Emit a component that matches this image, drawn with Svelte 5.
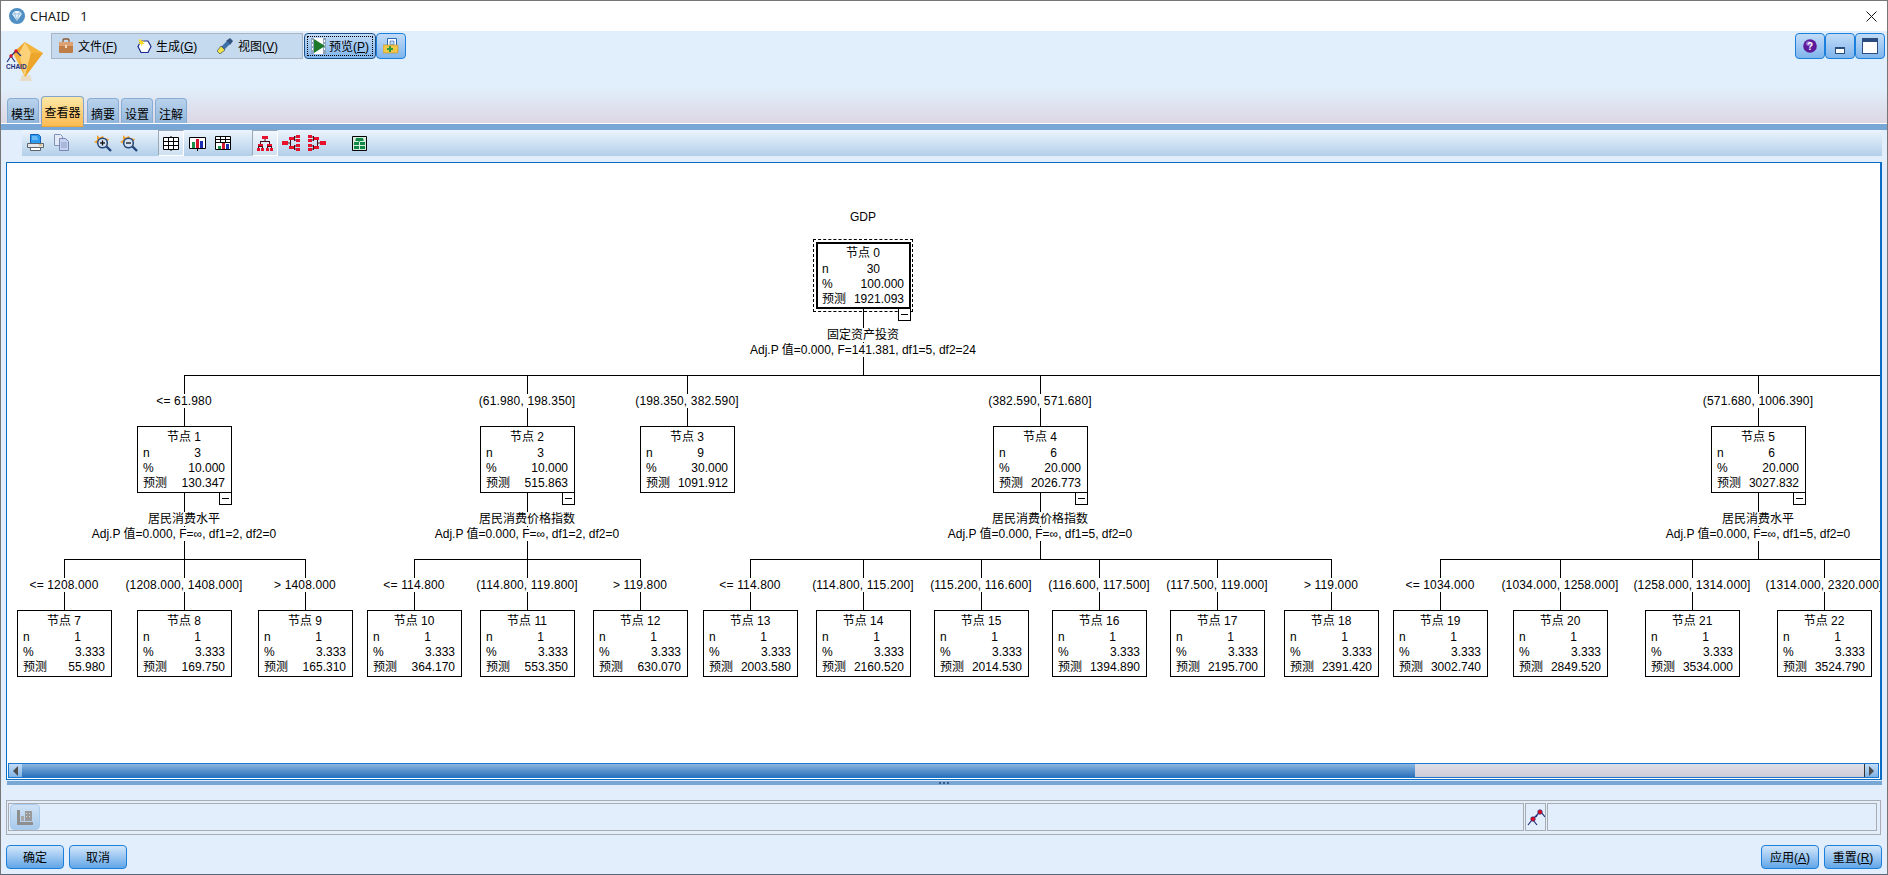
<script>
  const OX = 7;
  const OY = 163;
  const L0 = 242, L1 = 426, L2 = 610;

  const parents = [
    { id: 0, x: 863, y: L0, n: 30, pct: '100.000', pred: '1921.093', root: true, label: null,
      split: '固定资产投资', stat: 'Adj.P 值=0.000, F=141.381, df1=5, df2=24' },
    { id: 1, x: 184, y: L1, n: 3, pct: '10.000', pred: '130.347', label: '<= 61.980',
      split: '居民消费水平', stat: 'Adj.P 值=0.000, F=∞, df1=2, df2=0' },
    { id: 2, x: 527, y: L1, n: 3, pct: '10.000', pred: '515.863', label: '(61.980, 198.350]',
      split: '居民消费价格指数', stat: 'Adj.P 值=0.000, F=∞, df1=2, df2=0' },
    { id: 3, x: 687, y: L1, n: 9, pct: '30.000', pred: '1091.912', label: '(198.350, 382.590]' },
    { id: 4, x: 1040, y: L1, n: 6, pct: '20.000', pred: '2026.773', label: '(382.590, 571.680]',
      split: '居民消费价格指数', stat: 'Adj.P 值=0.000, F=∞, df1=5, df2=0' },
    { id: 5, x: 1758, y: L1, n: 6, pct: '20.000', pred: '3027.832', label: '(571.680, 1006.390]',
      split: '居民消费水平', stat: 'Adj.P 值=0.000, F=∞, df1=5, df2=0' }
  ];

  const leaves = [
    [7, 64, '55.980', '<= 1208.000'],
    [8, 184, '169.750', '(1208.000, 1408.000]'],
    [9, 305, '165.310', '> 1408.000'],
    [10, 414, '364.170', '<= 114.800'],
    [11, 527, '553.350', '(114.800, 119.800]'],
    [12, 640, '630.070', '> 119.800'],
    [13, 750, '2003.580', '<= 114.800'],
    [14, 863, '2160.520', '(114.800, 115.200]'],
    [15, 981, '2014.530', '(115.200, 116.600]'],
    [16, 1099, '1394.890', '(116.600, 117.500]'],
    [17, 1217, '2195.700', '(117.500, 119.000]'],
    [18, 1331, '2391.420', '> 119.000'],
    [19, 1440, '3002.740', '<= 1034.000'],
    [20, 1560, '2849.520', '(1034.000, 1258.000]'],
    [21, 1692, '3534.000', '(1258.000, 1314.000]'],
    [22, 1824, '3524.790', '(1314.000, 2320.000]']
  ].map(([id, x, pred, label]) => ({ id, x, y: L2, n: 1, pct: '3.333', pred, label }));

  const nodes = [...parents, ...leaves];

  const groups = [
    { from: 863, y: L0, kids: [184, 527, 687, 1040, 1758], end: 1880 },
    { from: 184, y: L1, kids: [64, 184, 305] },
    { from: 527, y: L1, kids: [414, 527, 640] },
    { from: 1040, y: L1, kids: [750, 863, 981, 1099, 1217, 1331] },
    { from: 1758, y: L1, kids: [1440, 1560, 1692, 1824], end: 1880 }
  ];

  const lines = groups.flatMap((g) => {
    const bus = g.y + 133;
    const right = g.end ?? Math.max(...g.kids);
    return [
      `M${g.from - OX + 0.5} ${g.y + 66 - OY}V${bus - OY}`,
      `M${Math.min(...g.kids) - OX} ${bus - OY + 0.5}H${right - OX + 1}`,
      ...g.kids.map((k) => `M${k - OX + 0.5} ${bus - OY}V${bus + 51 - OY}`)
    ];
  }).join('');

  const tools = [
    [{ k: 'print' }, { k: 'copy' }],
    [{ k: 'zin' }, { k: 'zout' }],
    [{ k: 'table', on: true }, { k: 'chart' }, { k: 'mix' }],
    [{ k: 'treed', on: true }, { k: 'treel' }, { k: 'treer' }],
    [{ k: 'green' }]
  ];

  const tabs = [
    { t: '模型' },
    { t: '查看器', on: true },
    { t: '摘要' },
    { t: '设置' },
    { t: '注解' }
  ];
</script>

{#snippet glass(minus)}
  <svg width="18" height="17" viewBox="0 0 18 17">
    <path d="M3 0l2.500 2.500L9 1l1 2 5 1-2 3 1 4-5-1-4 3-1-4-4-2 3-2z" fill="#f4a02e" />
    <circle cx="8.500" cy="8" r="4.800" fill="#d4e3f2" stroke="#23467d" stroke-width="1.500" />
    <path d="M6 8h5" stroke="#111" stroke-width="1.300" />
    {#if !minus}<path d="M8.500 5.500v5" stroke="#111" stroke-width="1.300" />{/if}
    <path d="M12.500 11.500l4.500 4.500" stroke="#23467d" stroke-width="2.400" />
  </svg>
{/snippet}

{#snippet tool(k)}
  {#if k === 'print'}
    <svg class="up1" width="17" height="17" viewBox="0 0 17 17">
      <path d="M3.500.500h8l2 2v7h-10z" fill="#2d9bf0" stroke="#1560b5" />
      <path d="M5 3h5M5 5h6" stroke="#a8d8fa" />
      <path d="M.5 9.500h16v4H.5z" fill="#e4e6ea" stroke="#5c636b" />
      <path d="M3.500 13.500h10v3h-10z" fill="#fff" stroke="#5c636b" />
      <path d="M12 11h3" stroke="#e2a13a" />
    </svg>
  {:else if k === 'copy'}
    <svg class="up1" width="15" height="17" viewBox="0 0 15 17">
      <path d="M.5.500h6l2 2v9h-8z" fill="#e3e9f5" stroke="#8591b8" />
      <path d="M5.500 4.500h6l3 3v9h-9z" fill="#c6d3ee" stroke="#7a86b3" />
      <path d="M7 9h6M7 11h6M7 13h6" stroke="#8d9ac4" />
    </svg>
  {:else if k === 'zin'}
    {@render glass(false)}
  {:else if k === 'zout'}
    {@render glass(true)}
  {:else if k === 'table'}
    <svg width="16" height="15" viewBox="0 0 16 15">
      <path d="M.5 1.500h15v12H.5z" fill="#fff" stroke="#000" />
      <path d="M.5 5.500h15M.5 9.500h15M5.500 1.500v12M10.500 1.500v12" stroke="#000" fill="none" />
      <path d="M8 0v2M8 13v2" stroke="#000" />
    </svg>
  {:else if k === 'chart'}
    <svg width="17" height="15" viewBox="0 0 17 15">
      <path d="M.5 1.500h16v11H.5z" fill="#fff" stroke="#000" />
      <path d="M3 6h3v6H3z" fill="#19914a" />
      <path d="M7 3h3v9H7z" fill="#d6142c" />
      <path d="M11 5h3v7h-3z" fill="#1c2fb0" />
      <path d="M8.500 13v2" stroke="#000" />
    </svg>
  {:else if k === 'mix'}
    <svg width="16" height="15" viewBox="0 0 16 15">
      <path d="M.5.500h15v13H.5z" fill="#fff" stroke="#000" />
      <path d="M.5 3.500h15M.5 6.500h15M5.500.500v6M10.500.500v6" stroke="#000" fill="none" />
      <path d="M3 10h3v3H3z" fill="#19914a" />
      <path d="M7 7h3v6H7z" fill="#d6142c" />
      <path d="M11 8h3v5h-3z" fill="#1c2fb0" />
    </svg>
  {:else if k === 'treed'}
    <svg width="16" height="15" viewBox="0 0 16 15">
      <path d="M8 3v2M3.500 5.500h9M3.500 5v3M12.500 5v3M1.500 10.500h4M10.500 10.500h4M1.500 10v2M5.500 10v2M10.500 10v2M14.500 10v2" stroke="#4a0c16" fill="none" />
      <path d="M5 0h6v3H5zM1 8h5v2H1zM10 8h5v2h-5zM0 12h3v3H0zM4 12h3v3H4zM9 12h3v3H9zM13 12h3v3h-3z" fill="#e8112d" />
    </svg>
  {:else if k === 'treel'}
    <svg width="18" height="16" viewBox="0 0 18 16">
      <path d="M5 8h3M8.500 3v10M9 3h2M9 13h2M12.500 1v5M12.500 10v5M13 2h2M13 5h2M13 11h2M13 14h2" stroke="#4a0c16" fill="none" />
      <path d="M0 6h6v4H0zM7 2h5v3H7zM7 11h5v3H7zM14 0h4v3h-4zM14 4h4v3h-4zM14 9h4v3h-4zM14 13h4v3h-4z" fill="#e8112d" />
    </svg>
  {:else if k === 'treer'}
    <svg width="18" height="16" viewBox="0 0 18 16">
      <path d="M13 8h-3M9.500 3v10M9 3H7M9 13H7M5.500 1v5M5.500 10v5M5 2H3M5 5H3M5 11H3M5 14H3" stroke="#4a0c16" fill="none" />
      <path d="M12 6h6v4h-6zM6 2h5v3H6zM6 11h5v3H6zM0 0h4v3H0zM0 4h4v3H0zM0 9h4v3H0zM0 13h4v3H0z" fill="#e8112d" />
    </svg>
  {:else if k === 'green'}
    <svg width="15" height="15" viewBox="0 0 15 15">
      <path d="M.5.500h14v14H.5z" fill="#d9ecdf" stroke="#000" />
      <path d="M4 2h7v3H4zM2 6h5v3H2zM8 6h5v3H8zM2 10h5v3H2zM8 10h5v3H8z" fill="#0f8a45" />
      <path d="M3 4h9M7 5v1" stroke="#0f8a45" />
    </svg>
  {/if}
{/snippet}

<div class="win">
  <header class="title">
    <svg class="appicon" width="16" height="16" viewBox="0 0 16 16">
      <circle cx="8" cy="8" r="8" fill="#4f8fc4" />
      <path d="M3 6l2.500-3h5L13 6l-5 7z" fill="#e8f2fa" />
      <path d="M3 6h10M6 6l2 7 2-7M5.500 3L6 6M10.500 3L10 6" stroke="#7fb0d6" fill="none" stroke-width=".7" />
    </svg>
    <span class="title-text">CHAID&nbsp;&nbsp;&nbsp;1</span>
    <svg class="close" width="11" height="11" viewBox="0 0 11 11">
      <path d="M.5.500l10 10M10.500.500l-10 10" stroke="#111" stroke-width="1" />
    </svg>
  </header>

  <section class="head">
    <div class="toprow">
      <svg class="logo" width="40" height="42" viewBox="0 0 40 42">
        <path d="M16 34h8l2 6H14z" fill="#e9dcc4" />
        <path d="M19 1L37 12 19 36 7 12z" fill="#f4b43c" />
        <path d="M19 1L25 12 19 36 13 12z" fill="#fbd27a" />
        <path d="M19 1L13 12H7zM19 36L25 12H37z" fill="#eda52c" />
        <path d="M10 10l-5 5M10 10l5 5M5 15l-4 6M5 15l4 6" stroke="#1c2a78" stroke-width="1.100" fill="none" />
        <circle cx="10" cy="10" r="1.700" fill="#d6142c" />
        <circle cx="5" cy="15" r="1.700" fill="#d6142c" />
        <text x="0" y="28" class="logotext">CHAID</text>
      </svg>
      <nav class="menu">
        <span class="mi mi-file">
          <svg width="16" height="16" viewBox="0 0 16 16">
            <path d="M5 4V2q0-1 1-1h4q1 0 1 1v2" fill="none" stroke="#8a5a34" stroke-width="1.300" />
            <path d="M1 5q0-1 1-1h12q1 0 1 1v9q0 1-1 1H2q-1 0-1-1z" fill="#bf7d47" />
            <path d="M1 5q0-1 1-1h12q1 0 1 1v3H1z" fill="#dda273" />
            <path d="M7 7h2v3H7z" fill="#f4dcc0" />
          </svg>
          <span class="lbl">文件(<u>F</u>)</span>
        </span>
        <span class="mi mi-gen">
          <svg width="15" height="15" viewBox="0 0 15 15">
            <path d="M4 2h7l3 5.500-3 6H4l-3-6z" fill="#fff" stroke="#1b2a8c" stroke-width="1.200" />
            <path d="M4 0l1 2.500L7.500 1 6 3.500 8 5 5.500 5 5 7.500 4 5H1l2-1.500L1.500 1z" fill="#f6dc25" />
          </svg>
          <span class="lbl">生成(<u>G</u>)</span>
        </span>
        <span class="mi mi-view">
          <svg width="16" height="16" viewBox="0 0 16 16">
            <path d="M9 3l4-3 3 3-3 4z" fill="#33527f" />
            <path d="M10 3l-6 6 3 3 6-6z" fill="#3d6fa8" />
            <path d="M4 8L0 13l3 3 5-4z" fill="#f2e24a" stroke="#1f3558" stroke-width=".6" />
          </svg>
          <span class="lbl">视图(<u>V</u>)</span>
        </span>
      </nav>
      <div class="bluebtn preview">
        <span class="focus">
          <svg width="15" height="16" viewBox="0 0 15 16">
            <path d="M0 0h15v16H0z" fill="#fff" />
            <path d="M0 0h3v16H0zM12 0h3v16h-3z" fill="#8ea4bd" />
            <path d="M1 2h1v2H1zM1 6h1v2H1zM1 10h1v2H1zM13 2h1v2h-1zM13 6h1v2h-1zM13 10h1v2h-1z" fill="#fff" />
            <path d="M3 1l11 7-11 7z" fill="#1d7a2c" />
          </svg>
          <span class="lbl">预览(<u>P</u>)</span>
        </span>
      </div>
      <div class="bluebtn extra">
        <svg width="16" height="16" viewBox="0 0 16 16">
          <path d="M4.500.500h9v10h-9z" fill="#fff" stroke="#2a66b8" />
          <path d="M7 3h4v4H7z" fill="#bcd5f0" stroke="#2a66b8" stroke-width=".6" />
          <path d="M0 7h14q1 0 1 1v6q0 1-1 1H1q-1 0-1-1z" fill="#f2c648" stroke="#b9892a" stroke-width=".6" />
          <path d="M6 8h2v2h2v2H8v2H6v-2H4v-2h2z" fill="#2e9a3a" />
        </svg>
      </div>
      <div class="winbtns">
        <div class="bluebtn wb">
          <svg width="14" height="14" viewBox="0 0 14 14">
            <circle cx="7" cy="7" r="6.800" fill="#5d1a9a" />
            <circle cx="5.500" cy="4.500" r="2.500" fill="#9a68c8" />
            <text x="7" y="11" class="qmark">?</text>
          </svg>
        </div>
        <div class="bluebtn wb">
          <svg class="wmin" width="10" height="7" viewBox="0 0 10 7">
            <path d="M0 0h10v7H0z" fill="#2b4c7e" />
            <path d="M1 2h8v4H1z" fill="#fff" />
          </svg>
        </div>
        <div class="bluebtn wb">
          <svg class="wmax" width="16" height="16" viewBox="0 0 16 16">
            <path d="M0 0h16v16H0z" fill="#2b4c7e" />
            <path d="M1 4h14v11H1z" fill="#fff" />
          </svg>
        </div>
      </div>
    </div>
    <div class="tabs">
      {#each tabs as tab}
        <span class="tab" class:on={tab.on}>{tab.t}</span>
      {/each}
    </div>
  </section>

  <div class="band"></div>

  <div class="toolbar">
    {#each tools as group}
      <div class="tgroup">
        {#each group as t}
          <span class="tool" class:on={t.on}>{@render tool(t.k)}</span>
        {/each}
      </div>
    {/each}
  </div>

  <main class="canvas">
    <div class="tree">
      <svg class="wires" width="1874" height="600">
        <path d={lines} stroke="#000" stroke-width="1" fill="none" shape-rendering="crispEdges" />
      </svg>

      <span class="cap" style="left:{863 - OX}px;top:{210 - OY}px">GDP</span>

      {#each nodes as node (node.id)}
        {#if node.label}
          <span class="cap lab" style="left:{node.x - OX}px;top:{node.y - 32 - OY}px">{node.label}</span>
        {/if}
        {#if node.root}
          <span class="dash" style="left:{node.x - 50 - OX}px;top:{node.y - 3 - OY}px"></span>
        {/if}
        <div class="node" class:root={node.root} style="left:{node.x - 47 - OX}px;top:{node.y - OY}px">
          <div class="nt">节点 {node.id}</div>
          <div class="nr"><span>n</span><span class="int">{node.n}</span></div>
          <div class="nr"><span>%</span><span>{node.pct}</span></div>
          <div class="nr"><span>预测</span><span>{node.pred}</span></div>
        </div>
        {#if node.split}
          <span class="minus" style="left:{node.x + 35 - OX}px;top:{node.y + 66 - OY}px"></span>
          <span class="cap" style="left:{node.x - OX}px;top:{node.y + 86 - OY}px">{node.split}</span>
          <span class="cap" style="left:{node.x - OX}px;top:{node.y + 101 - OY}px">{node.stat}</span>
        {/if}
      {/each}
    </div>
    <div class="scroll">
      <span class="arrow"><i class="tri-l"></i></span>
      <span class="thumb"></span>
      <span class="track"></span>
      <span class="arrow"><i class="tri-r"></i></span>
    </div>
  </main>

  <div class="split"><span class="dots"></span></div>

  <section class="status">
    <div class="cell c1">
      <span class="stbtn">
        <svg width="16" height="15" viewBox="0 0 16 15">
          <path d="M0 0h3v12h13v3H0z" fill="#8f8f8f" />
          <path d="M4 6h3v5H4z" fill="#a8a8a8" />
          <path d="M8 1h7v10H8z" fill="#9a9a9a" />
          <path d="M9 3h1v1H9zM12 3h1v1h-1zM9 6h1v1H9zM12 6h1v1h-1z" fill="#d2d2d2" />
        </svg>
      </span>
    </div>
    <div class="cell c2">
      <svg width="18" height="17" viewBox="0 0 18 17">
        <path d="M5 11l-4 5M6 11l4 5M12 3l-3 5M14 3l4 5M7 9l4-4" stroke="#1c2a78" stroke-width="1.200" fill="none" />
        <circle cx="6" cy="10" r="2.300" fill="#e30b20" stroke="#1c2a78" stroke-width=".6" />
        <circle cx="13" cy="3" r="2.300" fill="#e30b20" stroke="#1c2a78" stroke-width=".6" />
      </svg>
    </div>
    <div class="cell c3"></div>
  </section>

  <footer class="foot">
    <button class="fb">确定</button>
    <button class="fb">取消</button>
    <span class="spring"></span>
    <button class="fb">应用(<u>A</u>)</button>
    <button class="fb">重置(<u>R</u>)</button>
  </footer>
</div>

<style>
  :global(body) {
    margin: 0;
    background: #e2eefb;
  }

  .win {
    width: 1888px;
    height: 875px;
    box-sizing: border-box;
    display: flex;
    flex-direction: column;
    overflow: hidden;
    background: #e2eefb;
    border: 1px solid #767676;
    border-bottom-color: #56677a;
    font: 12px/14px "Liberation Sans", "Noto Sans CJK SC", sans-serif;
    color: #000;
  }

  .title {
    height: 30px;
    flex: none;
    display: flex;
    align-items: center;
    background: #fff;
    padding: 0 10px 0 8px;
  }

  .appicon {
    margin-right: 5px;
  }

  .title-text {
    font: 13px "Noto Sans", sans-serif;
    color: #1a1a1a;
  }

  .close {
    margin-left: auto;
  }

  .head {
    height: 92px;
    flex: none;
    display: flex;
    flex-direction: column;
    background: linear-gradient(#e1eefb 0, #e1eefb 62%, #dcd7e3 100%);
  }

  .toprow {
    height: 63px;
    flex: none;
    display: flex;
    align-items: flex-start;
    padding: 2px 2px 0 5px;
  }

  .logo {
    margin: 8px 5px 0 0;
    flex: none;
  }

  .logotext {
    font: bold 6.500px "Liberation Sans", sans-serif;
    fill: #1c2a78;
  }

  .qmark {
    font: bold 10px "Liberation Sans", sans-serif;
    fill: #fff;
    text-anchor: middle;
  }

  .menu {
    width: 252px;
    height: 26px;
    box-sizing: border-box;
    display: flex;
    align-items: center;
    background: #c5daef;
    border: 1px solid #a9b5c2;
  }

  .mi {
    display: flex;
    align-items: center;
    gap: 4px;
  }

  .lbl {
    padding-top: 2px;
  }

  .mi-file {
    margin-left: 6px;
    width: 79px;
  }

  .mi-gen {
    width: 80px;
    gap: 4px;
  }

  .mi-view {
    gap: 5px;
  }

  .bluebtn {
    height: 26px;
    box-sizing: border-box;
    display: flex;
    align-items: center;
    justify-content: center;
    border: 1px solid #1b7fdc;
    border-radius: 4px;
    background: linear-gradient(#c3dcf7, #7fb5ec);
    flex: none;
  }

  .preview {
    width: 72px;
    margin-left: 1px;
    border-color: #1e4f86;
  }

  .focus {
    width: 66px;
    height: 20px;
    box-sizing: border-box;
    display: flex;
    align-items: center;
    gap: 3px;
    padding-left: 3px;
    border: 1px dotted #000;
  }

  .extra {
    width: 30px;
  }

  .winbtns {
    margin-left: auto;
    display: flex;
  }

  .wb {
    width: 30px;
  }

  .wmin {
    margin-top: 8px;
  }

  .wmax {
    margin-top: -1px;
  }

  .tabs {
    height: 29px;
    flex: none;
    display: flex;
    align-items: flex-end;
    padding-left: 6px;
    gap: 2px;
  }

  .tab {
    width: 32px;
    height: 27px;
    box-sizing: border-box;
    display: flex;
    align-items: center;
    justify-content: center;
    padding-top: 5px;
    background: linear-gradient(#b9d2ec, #8fb5da);
    border: 1px solid #86add6;
    border-bottom: 0;
    border-radius: 4px 4px 0 0;
  }

  .tab.on {
    width: 43px;
    height: 31px;
    margin-bottom: -2px;
    padding-top: 2px;
    background: linear-gradient(#fce8a8, #fdbb52);
    border: 1px solid #7fa4c8;
    border-bottom: 1px solid #eaa53b;
    position: relative;
    z-index: 1;
    margin-right: 1px;
  }

  .band {
    height: 6px;
    flex: none;
    margin-top: 1px;
    background: #79a7d5;
    box-shadow: 0 -1px 0 #fff;
  }

  .toolbar {
    height: 26px;
    flex: none;
    margin: 0 5px 0 21px;
    display: flex;
    gap: 16px;
    background: linear-gradient(#ecf4fd, #b2cfe9);
  }

  .tgroup {
    display: flex;
  }

  .tool {
    width: 26px;
    height: 26px;
    box-sizing: border-box;
    display: flex;
    align-items: center;
    justify-content: center;
  }

  .tool.on {
    background: rgba(255, 255, 255, 0.35);
    border: 1px solid;
    border-color: #9aa9b8 #fff #fff #9aa9b8;
  }

  .up1 {
    margin-top: -2px;
  }

  .canvas {
    width: 1876px;
    height: 618px;
    flex: none;
    box-sizing: border-box;
    margin: 6px 0 0 5px;
    background: #fff;
    border: 1px solid #0b6cc4;
    border-right-width: 2px;
    display: flex;
    flex-direction: column;
  }

  .tree {
    height: 600px;
    width: 1873px;
    flex: none;
    position: relative;
    overflow: hidden;
  }

  .wires {
    position: absolute;
    left: 0;
    top: 0;
  }

  .cap {
    position: absolute;
    transform: translateX(-50%);
    white-space: nowrap;
    background: #fff;
    padding: 0 1px;
  }

  .lab {
    letter-spacing: 0.15px;
  }

  .node {
    position: absolute;
    width: 95px;
    height: 67px;
    box-sizing: border-box;
    background: #fff;
    border: 1px solid #000;
    padding: 3px 6px 0 5px;
    line-height: 15px;
  }

  .node.root {
    box-shadow: inset 0 0 0 1px #000;
  }

  .dash {
    position: absolute;
    width: 100px;
    height: 73px;
    box-sizing: border-box;
    border: 1px dashed #000;
  }

  .nt {
    text-align: center;
    margin-bottom: 1px;
  }

  .nr {
    display: flex;
    justify-content: space-between;
  }

  .int {
    padding-right: 24px;
  }

  .minus {
    position: absolute;
    width: 13px;
    height: 13px;
    box-sizing: border-box;
    background: #fff;
    border: 1px solid #000;
  }

  .minus::after {
    content: "";
    position: absolute;
    left: 2px;
    right: 2px;
    top: 5px;
    height: 1px;
    background: #000;
  }

  .scroll {
    height: 15px;
    margin: 0 1px;
    flex: none;
    display: flex;
    border: 1px solid #1b78d0;
    box-sizing: border-box;
  }

  .arrow {
    width: 13px;
    flex: none;
    display: flex;
    align-items: center;
    justify-content: center;
    background: linear-gradient(#c4dcf5, #7fb3e6);
  }

  .tri-l,
  .tri-r {
    width: 0;
    height: 0;
    border-top: 5px solid transparent;
    border-bottom: 5px solid transparent;
  }

  .tri-l {
    border-right: 5px solid #4d4d4d;
  }

  .tri-r {
    border-left: 5px solid #4d4d4d;
  }

  .thumb {
    width: 1393px;
    flex: none;
    background: linear-gradient(#8db6e0, #5d96cf 45%, #2c70ba);
  }

  .track {
    flex: 1;
    background: linear-gradient(#dfdfe8, #cdcbd7);
    border-right: 1px solid #333;
  }

  .split {
    height: 4px;
    flex: none;
    margin: 1px 5px 0 6px;
    background: #79a7d5;
    display: flex;
    justify-content: center;
  }

  .dots {
    width: 11px;
    height: 2px;
    margin-top: 1px;
    background: repeating-linear-gradient(90deg, #3b5f86 0 2px, transparent 2px 4px);
  }

  .status {
    height: 35px;
    flex: none;
    box-sizing: border-box;
    margin: 15px 6px 0 5px;
    padding: 2px 3px 3px 1px;
    border: 1px solid #a9adb2;
    display: flex;
    gap: 1px;
  }

  .cell {
    box-sizing: border-box;
    border: 1px solid #a9adb2;
    display: flex;
    align-items: center;
  }

  .c1 {
    width: 1516px;
    padding-left: 1px;
  }

  .c2 {
    width: 21px;
    justify-content: center;
  }

  .c3 {
    flex: 1;
  }

  .stbtn {
    width: 30px;
    height: 26px;
    box-sizing: border-box;
    display: flex;
    align-items: center;
    justify-content: center;
    border: 1px solid #a9ccef;
    border-radius: 4px;
    background: linear-gradient(#cfe2f6, #a9caec);
  }

  .foot {
    height: 24px;
    flex: none;
    margin: 10px 5px 0 5px;
    display: flex;
    gap: 5px;
  }

  .spring {
    flex: 1;
  }

  .fb {
    width: 58px;
    height: 24px;
    padding: 2px 0 0;
    box-sizing: border-box;
    border: 1px solid #1b7fdc;
    border-radius: 4px;
    background: linear-gradient(#d3e6fa, #62a6e8);
    font: 12px/14px "Liberation Sans", "Noto Sans CJK SC", sans-serif;
    color: #000;
  }
</style>
